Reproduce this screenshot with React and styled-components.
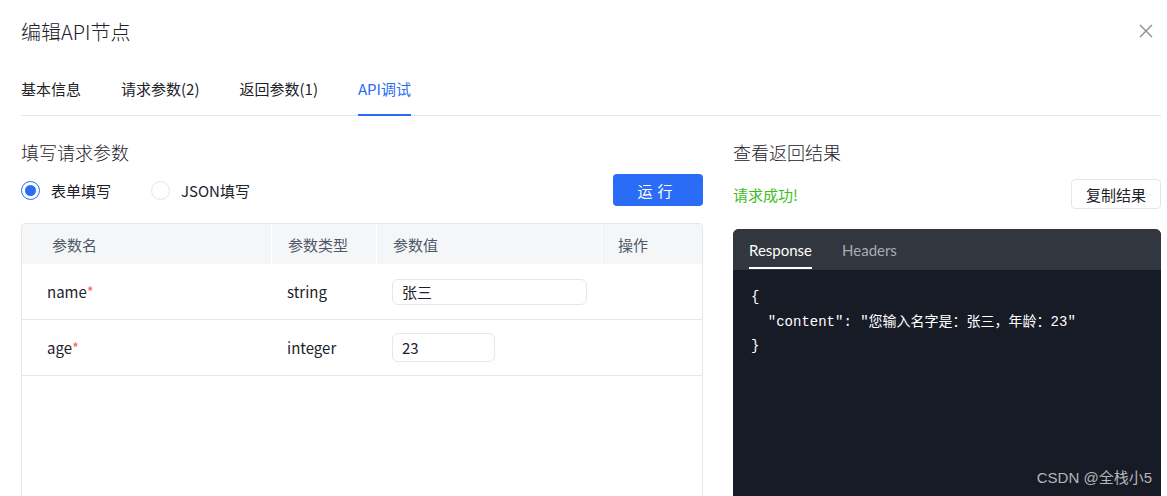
import React from "react";
import styled, { createGlobalStyle } from "styled-components";

const Global = createGlobalStyle`
  html, body { margin: 0; padding: 0; background: #fff; }
  body { font-family: "Noto Sans CJK SC", "Noto Sans", sans-serif; color: #1d2129; }
  * { box-sizing: border-box; }
`;

const Page = styled.div`
  width: 1167px;
  height: 496px;
  overflow: hidden;
  padding: 0 6px 0 21px;
  position: relative;
`;

const Header = styled.div`
  height: 62px;
  display: flex;
  align-items: center;
  justify-content: space-between;
`;

const Title = styled.h1`
  margin: 0;
  font-size: 20px;
  font-weight: 300;
  color: #1d2129;
`;

const Close = styled.button`
  border: 0;
  background: none;
  padding: 0;
  width: 18px;
  height: 18px;
  margin-right: 6px;
  display: flex;
  align-items: center;
  justify-content: center;
  cursor: pointer;
`;

const TabBar = styled.div`
  display: flex;
  gap: 40px;
  height: 54px;
  align-items: flex-end;
  border-bottom: 1px solid #e5e6eb;
`;

const Tab = styled.div`
  font-size: 15px;
  line-height: 20px;
  padding-bottom: 15px;
  color: ${(p) => (p.$active ? "#2b6cf6" : "#1d2129")};
  border-bottom: 2px solid ${(p) => (p.$active ? "#2b6cf6" : "transparent")};
  margin-bottom: -1px;
`;

const Columns = styled.div`
  display: grid;
  grid-template-columns: 682px 428px;
  gap: 30px;
`;

const Col = styled.div`
  display: flex;
  flex-direction: column;
`;

const SectionTitle = styled.h2`
  margin: 24px 0 0;
  font-size: 18px;
  line-height: 24px;
  font-weight: 300;
  color: #1d2129;
`;

const ModeRow = styled.div`
  margin-top: 10px;
  height: 32px;
  display: flex;
  align-items: center;
  justify-content: space-between;
`;

const Radios = styled.div`
  display: flex;
  gap: 40px;
`;

const RadioLabel = styled.label`
  display: flex;
  align-items: center;
  gap: 11px;
  font-size: 15px;
  color: #1d2129;
`;

const RadioCircle = styled.span`
  width: 19px;
  height: 19px;
  border-radius: 50%;
  border: 1px solid ${(p) => (p.$checked ? "#2b6cf6" : "#e5e6eb")};
  display: flex;
  align-items: center;
  justify-content: center;
  &::after {
    content: "";
    width: 11px;
    height: 11px;
    border-radius: 50%;
    background: ${(p) => (p.$checked ? "#2b6cf6" : "transparent")};
  }
`;

const PrimaryButton = styled.button`
  width: 90px;
  height: 32px;
  border: 0;
  border-radius: 4px;
  background: #2b6cf6;
  color: #fff;
  font-family: inherit;
  font-size: 15px;
  letter-spacing: 5px;
  padding-left: 5px;
`;

const Table = styled.div`
  margin-top: 17px;
  border: 1px solid #e5e6eb;
  border-radius: 4px;
  height: 300px;
  overflow: hidden;
`;

const Row = styled.div`
  display: grid;
  grid-template-columns: 249px 105px 225px 1fr;
  height: ${(p) => (p.$head ? "40px" : "56px")};
  background: ${(p) => (p.$head ? "#f5f6f8" : "#fff")};
  border-bottom: ${(p) => (p.$head ? "0" : "1px solid #e5e6eb")};
`;

const Cell = styled.div`
  display: flex;
  align-items: center;
  font-size: 15px;
  color: ${(p) => (p.$head ? "#4e5969" : "#1d2129")};
  padding-left: ${(p) => p.$pad || 16}px;
  border-left: ${(p) => (p.$head && !p.$first ? "1px solid #fff" : "0")};
`;

const Req = styled.span`
  color: #f76965;
`;

const Input = styled.div`
  width: ${(p) => p.$w}px;
  height: ${(p) => p.$h}px;
  border: 1px solid #e5e6eb;
  border-radius: 6px;
  display: flex;
  align-items: center;
  padding-left: 9px;
  font-size: 15px;
  color: #1d2129;
`;

const StatusRow = styled.div`
  margin-top: 15px;
  height: 30px;
  display: flex;
  align-items: center;
  justify-content: space-between;
`;

const Success = styled.span`
  color: #3dbd1d;
  font-size: 15px;
`;

const GhostButton = styled.button`
  width: 90px;
  height: 30px;
  border: 1px solid #e5e6eb;
  border-radius: 4px;
  background: #fff;
  font-family: inherit;
  font-size: 15px;
  color: #1d2129;
`;

const Console = styled.div`
  margin-top: 20px;
  height: 300px;
  border-radius: 6px 6px 0 0;
  background: #171b26;
  overflow: hidden;
`;

const ConsoleTabs = styled.div`
  height: 41px;
  background: #32363f;
  display: flex;
  gap: 30px;
  padding-left: 16px;
  align-items: flex-end;
`;

const ConsoleTab = styled.div`
  font-family: Lato, "Noto Sans", sans-serif;
  font-size: 15px;
  line-height: 20px;
  padding-bottom: 7px;
  color: ${(p) => (p.$active ? "#ffffff" : "#a9acb2")};
  border-bottom: 2px solid ${(p) => (p.$active ? "#ffffff" : "transparent")};
  margin-bottom: 1px;
`;

const Code = styled.pre`
  margin: 0;
  padding: 15px 18px;
  font-family: "Liberation Mono", "Noto Sans CJK SC", monospace;
  font-size: 14px;
  line-height: 24.5px;
  color: #ffffff;
  white-space: pre;
`;

const Watermark = styled.div`
  position: absolute;
  right: 15px;
  bottom: 9px;
  font-family: "Liberation Sans", "Noto Sans CJK SC", sans-serif;
  font-size: 15px;
  color: #b4b6ba;
`;

const rows = [
  { name: "name", type: "string", value: "张三", w: 195, h: 26 },
  { name: "age", type: "integer", value: "23", w: 103, h: 29 },
];

export default function App() {
  return (
    <>
      <Global />
      <Page>
        <Header>
          <Title>编辑API节点</Title>
          <Close aria-label="关闭">
            <svg width="14" height="14" viewBox="0 0 14 14">
              <path d="M1 1L13 13M13 1L1 13" stroke="#86909c" strokeWidth="1.4" />
            </svg>
          </Close>
        </Header>
        <TabBar>
          <Tab>基本信息</Tab>
          <Tab>请求参数(2)</Tab>
          <Tab>返回参数(1)</Tab>
          <Tab $active>API调试</Tab>
        </TabBar>
        <Columns>
          <Col>
            <SectionTitle>填写请求参数</SectionTitle>
            <ModeRow>
              <Radios>
                <RadioLabel>
                  <RadioCircle $checked />
                  表单填写
                </RadioLabel>
                <RadioLabel>
                  <RadioCircle />
                  JSON填写
                </RadioLabel>
              </Radios>
              <PrimaryButton>运行</PrimaryButton>
            </ModeRow>
            <Table>
              <Row $head>
                <Cell $head $first $pad={30}>参数名</Cell>
                <Cell $head>参数类型</Cell>
                <Cell $head>参数值</Cell>
                <Cell $head>操作</Cell>
              </Row>
              {rows.map((r) => (
                <Row key={r.name}>
                  <Cell $pad={25}>
                    {r.name}
                    <Req>*</Req>
                  </Cell>
                  <Cell>{r.type}</Cell>
                  <Cell>
                    <Input $w={r.w} $h={r.h}>{r.value}</Input>
                  </Cell>
                  <Cell />
                </Row>
              ))}
            </Table>
          </Col>
          <Col>
            <SectionTitle>查看返回结果</SectionTitle>
            <StatusRow>
              <Success>请求成功!</Success>
              <GhostButton>复制结果</GhostButton>
            </StatusRow>
            <Console>
              <ConsoleTabs>
                <ConsoleTab $active>Response</ConsoleTab>
                <ConsoleTab>Headers</ConsoleTab>
              </ConsoleTabs>
              <Code>{`{
  "content": "您输入名字是：张三，年龄：23"
}`}</Code>
            </Console>
          </Col>
        </Columns>
        <Watermark>CSDN @全栈小5</Watermark>
      </Page>
    </>
  );
}
